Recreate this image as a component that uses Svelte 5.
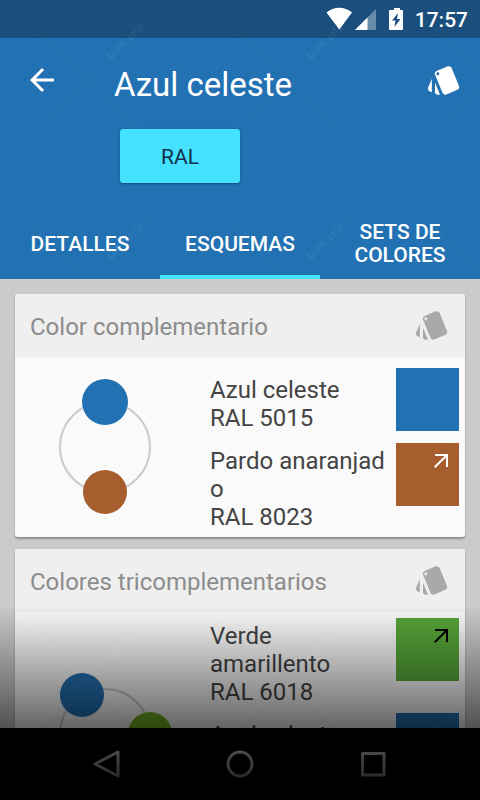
<script>
  let active = $state(1);
  const tabs = ['Detalles', 'Esquemas', 'Sets de colores'];

  const schemes = [
    {
      title: 'Color complementario',
      height: 180,
      dots: [
        { x: 90, y: 45, r: 23, color: '#2271b3' },
        { x: 90, y: 135, r: 22, color: '#a65e2e' }
      ],
      colors: [
        { name: 'Azul celeste', code: 'RAL 5015', color: '#2271b3' },
        { name: 'Pardo\u00a0anaranjado', code: 'RAL 8023', color: '#a65e2e', arrow: '#fff' }
      ]
    },
    {
      title: 'Colores tricomplementarios',
      height: 244,
      dots: [
        { x: 67, y: 83, r: 22, color: '#2271b3' },
        { x: 135, y: 122, r: 22, color: '#71b322' },
        { x: 67, y: 161, r: 22, color: '#b32271' }
      ],
      colors: [
        { name: 'Verde amarillento', code: 'RAL 6018', color: '#57a639', arrow: '#000' },
        { name: 'Azul celeste', code: 'RAL 5015', color: '#2271b3' },
        { name: 'Rojo violeta', code: 'RAL 4002', color: '#922b3e', arrow: '#fff' }
      ]
    }
  ];
</script>

{#snippet cardsIcon()}
  <svg width="36" height="36" viewBox="0 0 24 24" fill="currentColor" aria-hidden="true">
    <path d="M2.53 19.65l1.34.56v-9.03l-2.43 5.86c-.41 1.02.08 2.19 1.09 2.61zm19.5-3.7L17.07 3.98c-.31-.75-1.04-1.21-1.81-1.23-.26 0-.53.04-.79.15L7.1 5.95c-.75.31-1.21 1.03-1.23 1.8-.01.27.04.54.15.8l4.96 11.97c.31.76 1.05 1.22 1.83 1.23.26 0 .52-.05.77-.15l7.36-3.05c1.02-.42 1.51-1.59 1.09-2.6zM7.88 8.75c-.55 0-1-.45-1-1s.45-1 1-1 1 .45 1 1-.45 1-1 1zm-2 11c0 1.1.9 2 2 2h1.45l-3.34-8.08v6.08z" />
  </svg>
{/snippet}

<div class="screen">
  <div class="status">
    <svg width="78" height="24" viewBox="0 0 78 24" fill="#fff" aria-hidden="true">
      <path d="M.5 5.5C8-.8 18.500-.8 26 5.500L13.300 22.500z" />
      <path d="M50 2v21H29z" opacity=".35" />
      <path d="M41.500 10.500V23H29z" />
      <path fill-rule="evenodd" d="M68 1h6v2h2q1 0 1 1v18q0 1-1 1H64q-1 0-1-1V4q0-1 1-1h4zM72 6l-6 7.500h3.500L68.500 20l6-8H71z" />
    </svg>
    <span class="time">17:57</span>
  </div>

  <header>
    <div class="toolbar">
      <button class="icon" aria-label="Volver">
        <svg width="36" height="36" viewBox="0 0 24 24" fill="currentColor" aria-hidden="true">
          <path d="M20 11H7.830l5.590-5.590L12 4l-8 8 8 8 1.410-1.410L7.830 13H20v-2z" />
        </svg>
      </button>
      <h1>Azul celeste</h1>
      <button class="icon" aria-label="Colecciones">{@render cardsIcon()}</button>
    </div>
    <button class="ral">RAL</button>
    <div class="tabs" role="tablist">
      {#each tabs as tab, i}
        <button role="tab" aria-selected={active === i} class:active={active === i} onclick={() => (active = i)}>{tab}</button>
      {/each}
    </div>
  </header>

  <main>
    {#each schemes as scheme}
      <section>
        <div class="head">
          <h2>{scheme.title}</h2>
          <button class="icon" aria-label="Guardar esquema">{@render cardsIcon()}</button>
        </div>
        <div class="body">
          <svg class="wheel" width="180" height={scheme.height} viewBox="0 0 180 {scheme.height}" aria-hidden="true">
            <circle cx="90" cy={scheme.height / 2} r="45" fill="none" stroke="#ccc" stroke-width="2" />
            {#each scheme.dots as dot}
              <circle cx={dot.x} cy={dot.y} r={dot.r} fill={dot.color} />
            {/each}
          </svg>
          <ul>
            {#each scheme.colors as item}
              <li>
                <p>{item.name}<br />{item.code}</p>
                {#if item.arrow}
                  <button class="swatch" style:background={item.color} style:color={item.arrow} aria-label="Abrir {item.code}">
                    <svg width="14" height="14" viewBox="0 0 14 14" fill="none" stroke="currentColor" stroke-width="2" aria-hidden="true">
                      <path d="M1 1h12v12M13 1L.700 13.300" />
                    </svg>
                  </button>
                {:else}
                  <div class="swatch" style:background={item.color}></div>
                {/if}
              </li>
            {/each}
          </ul>
        </div>
      </section>
    {/each}
  </main>

  <nav>
    <button aria-label="Atrás">
      <svg width="28" height="28" viewBox="0 0 28 28" aria-hidden="true"><path d="M25 2v24L2 14z" /></svg>
    </button>
    <button aria-label="Inicio">
      <svg width="28" height="28" viewBox="0 0 28 28" aria-hidden="true"><circle cx="14" cy="14" r="12" /></svg>
    </button>
    <button aria-label="Recientes">
      <svg width="28" height="28" viewBox="0 0 28 28" aria-hidden="true"><path d="M3.500 3.500h21.500v21.500H3.500z" /></svg>
    </button>
  </nav>

  <div class="shade"></div>
  <svg class="mark" aria-hidden="true">
    <defs>
      <pattern id="mark" width="200" height="200" patternUnits="userSpaceOnUse">
        <g fill="#fff" stroke="#fff">
          <path d="M5 0L140 130M160 5L142 23M103 62L35 130" stroke-width="2" stroke-dasharray="2 4" opacity=".03" />
          <text x="127" y="45" stroke="none" font-size="11" text-anchor="middle" transform="rotate(-45 127 45)" opacity=".08">4APK.info</text>
        </g>
      </pattern>
    </defs>
    <rect width="100%" height="100%" fill="url(#mark)" />
  </svg>
</div>

<style>
  :global(body) {
    background: #cbcbcb;
  }
  .screen {
    position: relative;
    display: flex;
    flex-direction: column;
    height: 100vh;
    overflow: hidden;
    background: #cbcbcb;
    font-family: Roboto, sans-serif;
    color: #444;
  }
  button {
    margin: 0;
    padding: 0;
    border: 0;
    background: none;
    color: inherit;
    font: inherit;
    cursor: pointer;
  }
  h1, h2, p, ul {
    margin: 0;
    padding: 0;
    font-weight: 400;
  }
  svg {
    display: block;
  }
  .status {
    display: flex;
    flex: none;
    align-items: center;
    justify-content: flex-end;
    gap: 11px;
    height: 38px;
    padding-right: 12px;
    background: #1a4f7d;
    color: #fff;
  }
  .time {
    padding-top: 2px;
    font-size: 21px;
    font-weight: 500;
    line-height: 36px;
  }
  header {
    flex: none;
    background: #2271b3;
    color: #fff;
  }
  .toolbar {
    display: flex;
    align-items: center;
    height: 84px;
    padding: 0 18px 0 24px;
  }
  h1 {
    flex: 1;
    padding: 10px 0 0 54px;
    font-size: 33px;
    line-height: 40px;
  }
  .icon {
    flex: none;
  }
  .ral {
    display: block;
    width: 120px;
    height: 54px;
    margin: 7px 0 25px 120px;
    padding-top: 2px;
    border-radius: 3px;
    background: #44e2ff;
    box-shadow: 0 1px 3px rgba(0, 0, 0, 0.3);
    color: #12304a;
    font-size: 21px;
  }
  .tabs {
    display: flex;
    height: 71px;
  }
  .tabs button {
    position: relative;
    flex: 1;
    padding: 1px 18px 0;
    font-size: 21px;
    font-weight: 500;
    line-height: 23px;
    text-transform: uppercase;
  }
  .active::after {
    content: '';
    position: absolute;
    right: 0;
    bottom: 0;
    left: 0;
    height: 4px;
    background: #44e2ff;
  }
  main {
    display: flex;
    flex: 1;
    flex-direction: column;
    gap: 12px;
    min-height: 0;
    padding: 15px;
    overflow-y: auto;
    scrollbar-width: none;
  }
  section {
    flex: none;
    border-radius: 3px;
    background: #fafafa;
    box-shadow: 0 2px 2px rgba(0, 0, 0, 0.3);
  }
  .head {
    display: flex;
    align-items: center;
    justify-content: space-between;
    height: 63px;
    padding: 0 15px;
    border-radius: 3px 3px 0 0;
    background: #efefef;
    color: #8c8c8c;
  }
  .head .icon {
    padding-bottom: 1px;
    color: #a9a9a9;
  }
  h2 {
    padding-top: 3px;
    font-size: 24px;
    line-height: 28px;
  }
  .body {
    display: flex;
    align-items: flex-start;
    min-height: 180px;
  }
  .wheel {
    flex: none;
  }
  ul {
    display: flex;
    flex: 1;
    flex-direction: column;
    align-self: flex-end;
    gap: 3px;
    padding: 6px 6px 2px 15px;
    list-style: none;
  }
  li {
    display: flex;
    align-items: center;
    gap: 6px;
    min-height: 72px;
  }
  p {
    flex: 1;
    min-width: 0;
    padding: 4px 0;
    overflow-wrap: anywhere;
    font-size: 24px;
    line-height: 28px;
  }
  .swatch {
    display: flex;
    flex: none;
    align-items: flex-start;
    align-self: flex-start;
    justify-content: flex-end;
    width: 63px;
    height: 63px;
  }
  button.swatch {
    padding: 11px;
  }
  nav {
    display: flex;
    flex: none;
    align-items: center;
    height: 72px;
    padding: 0 40px;
    background: #000;
  }
  nav button {
    display: flex;
    flex: 1;
    justify-content: center;
  }
  nav svg {
    fill: none;
    stroke: #fff;
    stroke-width: 3;
    stroke-linejoin: round;
  }
  .shade {
    position: absolute;
    right: 0;
    bottom: 0;
    left: 0;
    height: 195px;
    background: linear-gradient(transparent, rgba(0, 0, 0, 0.95));
    pointer-events: none;
  }
  .mark {
    position: absolute;
    top: 0;
    left: 0;
    width: 100%;
    height: 100%;
    pointer-events: none;
  }
</style>
